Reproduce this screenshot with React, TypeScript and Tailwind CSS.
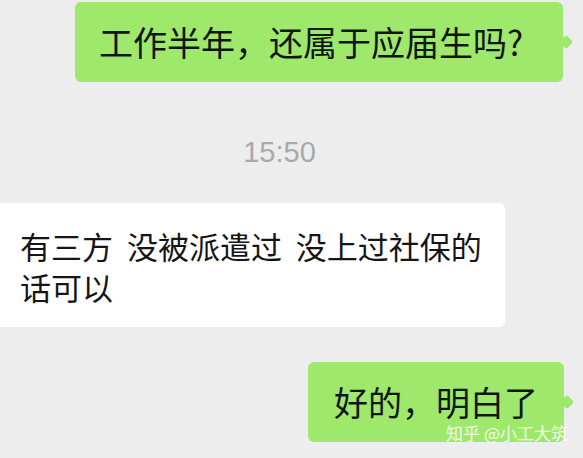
import React from "react";

const cjk = { fontFamily: '"Noto Sans CJK SC", "Noto Sans", sans-serif' };

function GreenBubble({ children, className }: { children: React.ReactNode; className?: string }) {
  return (
    <div className={`relative flex h-[80px] items-center rounded-[6px] bg-[#9ee86c] text-[34px] leading-none text-[#101510] ${className ?? ""}`}>
      {children}
      <span className="absolute -right-[8px] top-1/2 h-[10px] w-[10px] -translate-y-1/2 rotate-45 rounded-[2px] bg-[#9ee86c]" />
    </div>
  );
}

export default function App() {
  return (
    <div className="relative flex h-[458px] w-[583px] flex-col overflow-hidden bg-[#ededed]" style={cjk}>
      <div className="mt-[2px] flex justify-end pr-[20px]">
        <GreenBubble className="w-[488px] pl-[24px]">工作半年，还属于应届生吗?</GreenBubble>
      </div>

      <div
        className="mt-[56px] text-center text-[29px] leading-[28px] text-[#a9a9a9] pr-[24px]"
        style={{ fontFamily: '"Liberation Sans", Arial, sans-serif' }}
      >
        15:50
      </div>

      <div className="mt-[37px] w-[505px] rounded-r-[6px] bg-white pb-[20px] pl-[20px] pt-[22px] text-[31px] leading-[41px] text-[#151515] whitespace-pre">
        有三方  没被派遣过  没上过社保的
        <br />
        话可以
      </div>

      <div className="mt-[35px] flex justify-end pr-[19px]">
        <GreenBubble className="w-[256px] pl-[26px]">好的，明白了</GreenBubble>
      </div>

      <div className="absolute bottom-[17px] right-[15px] text-[17px] leading-none text-white/85">
        知乎 @小工大筑
      </div>
    </div>
  );
}
